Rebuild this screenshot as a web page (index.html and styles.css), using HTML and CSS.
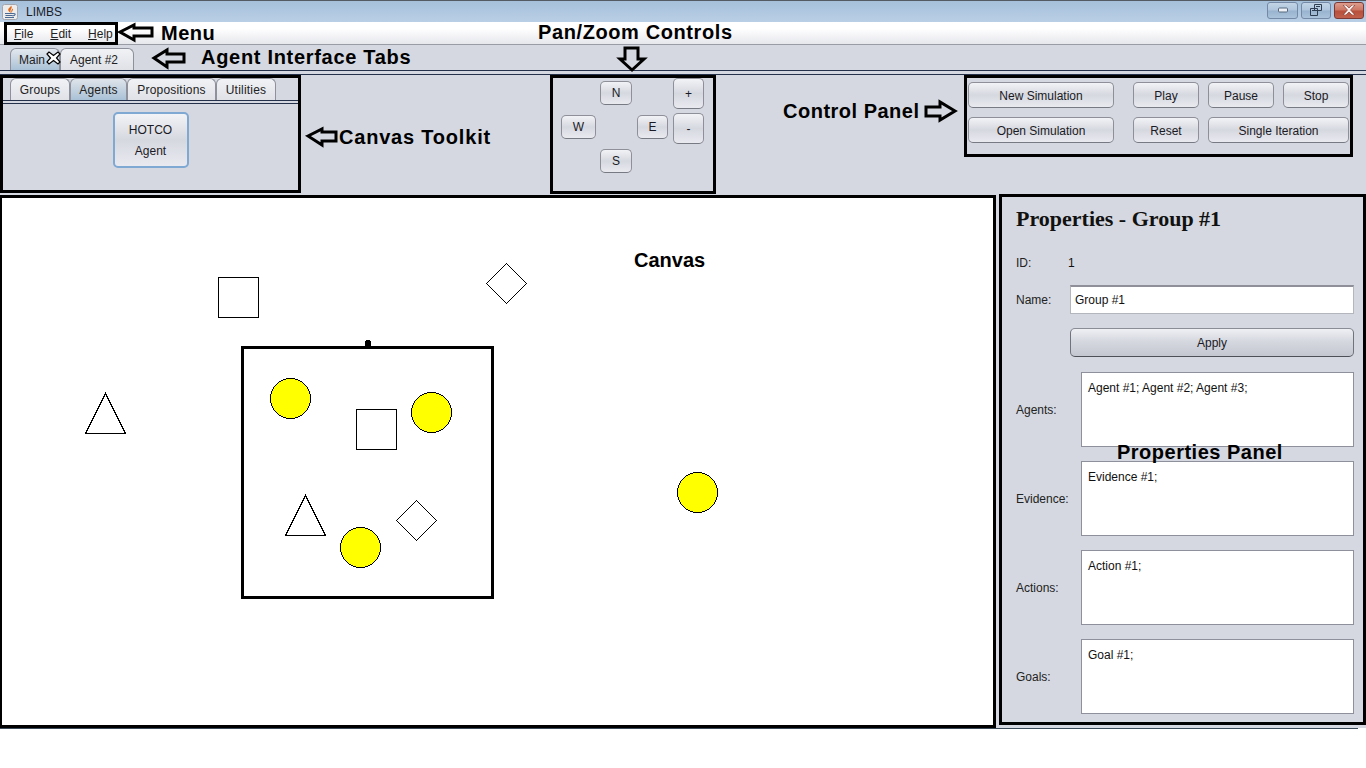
FILE: index.html
```html
<!DOCTYPE html>
<html lang="en">
<head>
    <meta charset="UTF-8">
    <meta name="viewport" content="width=device-width, initial-scale=1.0">
    <title>LIMBS</title>
    <link rel="stylesheet" href="styles.css">
</head>
<body>
    <header class="titlebar">
        <svg class="java-icon" width="16" height="16" viewBox="0 0 16 16">
            <rect x="0.5" y="0.5" width="15" height="15" rx="2" fill="#ececec" stroke="#a4a6ae"/>
            <path d="M9 1.5 C11.5 4 7 5.5 9 9 C6 7.5 5.5 5.5 7 4 C8 3.2 9 2.6 9 1.5 Z M11 4.5 C11.5 6.5 9.5 7 10 9 C8.8 7.8 9 5.8 11 4.5 Z" fill="#e2691a"/>
            <path d="M3 9.5 H11 M3.5 11.5 H10.5 M3 13.5 H12 M11 9.5 C14 9.5 14 11.5 10.5 12" fill="none" stroke="#4a6a94" stroke-width="1.1"/>
        </svg>
        <span class="app-name">LIMBS</span>
        <div class="window-buttons">
            <div class="win-btn win-min">
                <svg width="12" height="6" viewBox="0 0 12 6"><rect x="1.5" y="1" width="9" height="4" rx="1" fill="#eef2f6" stroke="#56687f"/></svg>
            </div>
            <div class="win-btn">
                <svg width="12" height="12" viewBox="0 0 12 12"><path d="M4.5 0.5 H11.5 V6.5 H4.5 Z M0.5 4.5 H7.5 V11.5 H0.5 Z M2 6.5 H6 M6 2.5 H10" fill="none" stroke="#2f3d52"/></svg>
            </div>
            <div class="win-btn win-close">
                <svg width="14" height="10" viewBox="0 0 14 10"><path d="M1 0 H4 L7 3 L10 0 H13 L8.5 5 L13 10 H10 L7 7 L4 10 H1 L5.5 5 Z" fill="#f6eeec" stroke="#7a2a20" stroke-width="0.6"/></svg>
            </div>
        </div>
    </header>

    <nav class="menubar">
        <div class="menu-box">
            <span class="menu-item"><u>F</u>ile</span>
            <span class="menu-item"><u>E</u>dit</span>
            <span class="menu-item"><u>H</u>elp</span>
        </div>
    </nav>

    <div class="tabstrip">
        <div class="agent-tabs">
            <div class="agent-tab active">Main
                <svg class="tab-close" width="15" height="14" viewBox="0 0 15 14"><path d="M1 3 L3 1 L7.5 4.5 L12 1 L14 3 L10.5 7 L14 11 L12 13 L7.5 9.5 L3 13 L1 11 L4.5 7 Z" fill="#fff" stroke="#000" stroke-width="1.2"/></svg>
            </div>
            <div class="agent-tab second">Agent #2</div>
        </div>
    </div>

    <section class="toolbar">
        <div class="toolkit">
            <div class="tool-tabs">
                <div class="tool-tab tab-groups">Groups</div>
                <div class="tool-tab tab-agents active">Agents</div>
                <div class="tool-tab tab-props">Propositions</div>
                <div class="tool-tab tab-utils">Utilities</div>
            </div>
            <div class="tool-body">
                <button class="btn hotco">HOTCO<br>Agent</button>
            </div>
        </div>

        <div class="panzoom">
            <div class="dpad">
                <button class="btn pad-n">N</button>
                <button class="btn pad-w">W</button>
                <button class="btn pad-e">E</button>
                <button class="btn pad-s">S</button>
            </div>
            <div class="zoom-btns">
                <button class="btn zoom-btn">+</button>
                <button class="btn zoom-btn">-</button>
            </div>
        </div>

        <div class="controls">
            <button class="btn">New Simulation</button>
            <button class="btn">Play</button>
            <button class="btn">Pause</button>
            <button class="btn">Stop</button>
            <button class="btn">Open Simulation</button>
            <button class="btn">Reset</button>
            <button class="btn span-2">Single Iteration</button>
        </div>
    </section>

    <main class="workspace">
        <div class="canvas">
            <svg class="canvas-art" width="994" height="527" viewBox="2 198 994 527">
                <rect x="218.5" y="277.5" width="40" height="40" fill="#fff" stroke="#000"/>
                <polygon points="506.5,263.5 526.5,283.5 506.5,303.5 486.5,283.5" fill="#fff" stroke="#000"/>
                <polygon points="105.5,393.5 125.5,433.5 85.5,433.5" fill="#fff" stroke="#000"/>
                <rect x="242.5" y="347.5" width="250" height="250" fill="#fff" stroke="#000" stroke-width="3"/>
                <rect x="365" y="340" width="6" height="7" rx="3" fill="#000"/>
                <circle cx="290.5" cy="398.5" r="20" fill="#ff0" stroke="#000"/>
                <circle cx="431.5" cy="412.5" r="20" fill="#ff0" stroke="#000"/>
                <circle cx="360.5" cy="547.5" r="20" fill="#ff0" stroke="#000"/>
                <circle cx="697.5" cy="492.5" r="20" fill="#ff0" stroke="#000"/>
                <rect x="356.5" y="409.5" width="40" height="40" fill="#fff" stroke="#000"/>
                <polygon points="305.5,495.5 325.5,535.5 285.5,535.5" fill="#fff" stroke="#000"/>
                <polygon points="416.5,500.5 436.5,520.5 416.5,540.5 396.5,520.5" fill="#fff" stroke="#000"/>
            </svg>
        </div>
        <aside class="sidebar">
            <div class="properties">
                <h2 class="props-title">Properties - Group #1</h2>
                <div class="row row-id"><span class="label">ID:</span><span>1</span></div>
                <div class="row row-name"><span class="label">Name:</span><input class="name-input" type="text" value="Group #1"></div>
                <div class="row row-apply"><span class="label"></span><button class="btn apply">Apply</button></div>
                <div class="row row-area first"><span class="label wide">Agents:</span><textarea class="area">Agent #1; Agent #2; Agent #3;</textarea></div>
                <div class="row row-area"><span class="label wide">Evidence:</span><textarea class="area">Evidence #1;</textarea></div>
                <div class="row row-area"><span class="label wide">Actions:</span><textarea class="area">Action #1;</textarea></div>
                <div class="row row-area"><span class="label wide">Goals:</span><textarea class="area">Goal #1;</textarea></div>
            </div>
        </aside>
    </main>
    <div class="bottom-line"></div>

    <!-- annotations drawn over the screenshot -->
    <svg class="arrows" width="1366" height="768" viewBox="0 0 1366 768">
        <polygon points="120,32 134,25 134,28 152,28 152,36 134,36 134,40"/>
        <polygon points="154,58 167,50 167,54 184,54 184,62 167,62 167,67"/>
        <polygon points="308,136 322,129 322,132 336,132 336,141 322,141 322,145"/>
        <polygon points="632,70 620,59 625,59 625,48 638,48 638,59 644,59"/>
        <polygon points="955,111 940,102 940,107 926,107 926,116 940,116 940,120"/>
    </svg>
    <span class="note note-menu">Menu</span>
    <span class="note note-tabs">Agent Interface Tabs</span>
    <span class="note note-pan">Pan/Zoom Controls</span>
    <span class="note note-toolkit">Canvas Toolkit</span>
    <span class="note note-control">Control Panel</span>
    <span class="note note-canvas">Canvas</span>
    <span class="note note-props">Properties Panel</span>
</body>
</html>
```

FILE: styles.css
```css
* {
    box-sizing: border-box;
}
body {
    font-family: "Liberation Sans", Arial, sans-serif;
    font-size: 12px;
    margin: 0;
    width: 1366px;
    height: 768px;
    overflow: hidden;
    position: relative;
    background-color: #fff;
    color: #111;
}

/* window title */
.titlebar {
    height: 22px;
    display: flex;
    align-items: center;
    padding-left: 2px;
    border-top: 1px solid #555b63;
    background: linear-gradient(#a6c0db, #b9cfe5);
}
.java-icon {
    margin-top: 1px;
}
.app-name {
    margin-left: 8px;
    color: #1a2028;
}
.window-buttons {
    margin-left: auto;
    margin-right: 2px;
    display: flex;
    gap: 3px;
    margin-top: -3px;
}
.win-btn {
    width: 30px;
    height: 17px;
    display: flex;
    align-items: center;
    justify-content: center;
    border: 1px solid #7389a6;
    border-radius: 3px;
    background: linear-gradient(#c2d4e6 0%, #afc5dc 48%, #98b3cf 52%, #abc3db 100%);
}
.win-min {
    width: 31px;
}
.win-close {
    border-color: #7b3a36;
    background: linear-gradient(#dd9c8c 0%, #cc7663 48%, #b74f3b 52%, #c0604c 100%);
}

/* menu */
.menubar {
    height: 23px;
    border-bottom: 1px solid #9a9ca5;
    background: linear-gradient(#fff 30%, #e6e7ec);
}
.menu-box {
    margin-left: 4px;
    width: 114px;
    height: 23px;
    border: 3px solid #000;
    display: flex;
    align-items: center;
    padding-left: 7px;
    gap: 17px;
    color: #222;
}
.menu-item {
    white-space: nowrap;
}

/* agent tabs */
.tabstrip {
    height: 30px;
    background-color: #d5d8e0;
    border-bottom: 1px solid #25304a;
    padding-top: 3px;
}
.agent-tabs {
    height: 23px;
    display: flex;
    padding-left: 10px;
    border-bottom: 1px solid #25304a;
}
.agent-tab {
    height: 22px;
    border: 1px solid #8e919b;
    border-bottom: 0;
    border-radius: 6px 6px 0 0;
    background: linear-gradient(#f1f2f5, #dfe1e7);
    padding-top: 4px;
    white-space: nowrap;
    color: #222;
}
.agent-tab.active {
    width: 50px;
    padding-left: 8px;
    position: relative;
    background: linear-gradient(#e4e8ee, #a9c1d6);
}
.agent-tab.second {
    width: 74px;
    padding-left: 9px;
}
.tab-close {
    position: absolute;
    top: 2px;
    left: 35px;
}

/* toolbar row */
.toolbar {
    height: 120px;
    display: flex;
    align-items: flex-start;
    background-color: #d5d8e0;
}
.toolkit {
    width: 301px;
    height: 118px;
    border: 3px solid #000;
}
.tool-tabs {
    height: 26px;
    display: flex;
    padding-left: 7px;
    border-bottom: 1px solid #25304a;
    position: relative;
}
.tool-tabs::after {
    content: "";
    position: absolute;
    left: 0;
    right: 0;
    top: 22px;
    border-top: 1px solid #25304a;
}
.tool-tab {
    height: 22px;
    text-align: center;
    padding-top: 4px;
    border: 1px solid #8e919b;
    border-bottom: 0;
    border-radius: 6px 6px 0 0;
    background: linear-gradient(#f1f2f5, #dfe1e7);
    color: #222;
    letter-spacing: 0.2px;
}
.tool-tab.active {
    background: linear-gradient(#dfe4ea, #a9c1d6);
}
.tab-groups { width: 60px; }
.tab-agents { width: 57px; }
.tab-props { width: 89px; }
.tab-utils { width: 60px; }
.tool-body {
    display: flex;
    justify-content: center;
    padding-top: 8px;
}
.btn {
    font-family: "Liberation Sans", Arial, sans-serif;
    font-size: 12px;
    color: #1a1a24;
    padding: 0;
    border: 1px solid #8e8f99;
    border-bottom-color: #777983;
    border-radius: 5px;
    background: linear-gradient(#f2f3f6 0%, #d6d8e0 50%, #e9eaf0 100%);
}
.hotco {
    width: 76px;
    height: 56px;
    line-height: 21px;
    padding-top: 2px;
    border: 2px solid #7fa8d2;
    border-radius: 5px;
}

/* pan and zoom */
.panzoom {
    margin-left: 249px;
    width: 166px;
    height: 119px;
    border: 3px solid #000;
    display: flex;
    padding-left: 8px;
}
.dpad {
    display: grid;
    grid-template-columns: 35px 32px 32px;
    grid-template-rows: 24px 24px 24px;
    column-gap: 4px;
    row-gap: 10px;
    margin-top: 3px;
}
.dpad .pad-e {
    margin-left: 1px;
}
.pad-n { grid-column: 2; grid-row: 1; }
.pad-w { grid-column: 1; grid-row: 2; }
.pad-e { grid-column: 3; grid-row: 2; }
.pad-s { grid-column: 2; grid-row: 3; }
.zoom-btns {
    display: flex;
    flex-direction: column;
    gap: 4px;
    margin-left: 5px;
}
.zoom-btn {
    width: 31px;
    height: 31px;
}

/* simulation controls */
.controls {
    margin-left: 248px;
    width: 389px;
    height: 82px;
    border: 3px solid #000;
    display: grid;
    grid-template-columns: 146px 66px 66px 66px;
    grid-template-rows: 26px 26px;
    column-gap: 9px;
    row-gap: 9px;
    padding: 4px 0 0 1px;
}
.controls .btn {
    padding-top: 2px;
}
.controls .btn:nth-child(2),
.controls .btn:nth-child(6) {
    margin-left: 10px;
    margin-right: -10px;
    grid-column: 2;
}
.controls .btn:nth-child(3),
.controls .btn:nth-child(4),
.controls .btn:nth-child(7) {
    transform: translateX(10px);
}
.span-2 {
    grid-column: span 2;
}

/* main area */
.workspace {
    height: 533px;
    display: flex;
}
.canvas {
    width: 996px;
    border: 3px solid #000;
    border-left-width: 2px;
    background-color: #fff;
}
.canvas-art {
    display: block;
    shape-rendering: crispEdges;
}
.sidebar {
    width: 370px;
    padding-left: 3px;
    background-color: #d5d8e0;
}
.properties {
    height: 531px;
    margin-top: -1px;
    border: 3px solid #000;
    background-color: #d5d8e0;
    padding: 10px 9px 0 14px;
    position: relative;
}
.props-title {
    margin: 0;
    font-family: "Liberation Serif", "Times New Roman", serif;
    font-size: 22px;
    line-height: 24px;
    font-weight: bold;
    color: #111;
}
.row {
    display: flex;
    align-items: center;
}
.label {
    width: 54px;
    flex-shrink: 0;
    color: #222;
}
.label.wide {
    width: 65px;
}
.row-id {
    margin-top: 25px;
    height: 14px;
}
.row-id .label {
    width: 52px;
}
.row-name {
    margin-top: 15px;
}
.row-apply {
    margin-top: 14px;
}
.name-input {
    flex: 1;
    height: 29px;
    min-width: 0;
    border: 1px solid #b4b6be;
    border-top: 2px solid #8e8f99;
    padding: 0 4px;
    font-family: "Liberation Sans", Arial, sans-serif;
    font-size: 12px;
    color: #111;
    background-color: #fff;
}
.apply {
    flex: 1;
    height: 29px;
    border-color: #8a8c96 #70727c #4e5058;
    background: linear-gradient(#eff0f4 0%, #d6d8e0 45%, #c4c7d0 100%);
}
.row-area {
    margin-top: 14px;
}
.row-area.first {
    margin-top: 15px;
}
.area {
    flex: 1;
    height: 75px;
    min-width: 0;
    display: block;
    border: 1px solid #8e919b;
    padding: 8px 6px;
    font-family: "Liberation Sans", Arial, sans-serif;
    font-size: 12px;
    line-height: 14px;
    color: #111;
    background-color: #fff;
    resize: none;
    overflow: hidden;
}
.bottom-line {
    width: 1358px;
    height: 1px;
    background-color: #3a4a58;
}

/* annotations */
.arrows {
    position: absolute;
    top: 0;
    left: 0;
    fill: none;
    stroke: #000;
    stroke-width: 3;
    pointer-events: none;
}
.note {
    position: absolute;
    font-size: 20px;
    line-height: 24px;
    font-weight: bold;
    color: #000;
    white-space: nowrap;
}
.note-menu { left: 161px; top: 21px; letter-spacing: 0.5px; }
.note-tabs { left: 201px; top: 45px; letter-spacing: 0.7px; }
.note-pan { left: 538px; top: 20px; letter-spacing: 0.6px; }
.note-toolkit { left: 339px; top: 125px; letter-spacing: 0.8px; }
.note-control { left: 783px; top: 99px; letter-spacing: 0.5px; }
.note-canvas { left: 634px; top: 248px; }
.note-props { left: 1117px; top: 440px; letter-spacing: 0.5px; }
```
